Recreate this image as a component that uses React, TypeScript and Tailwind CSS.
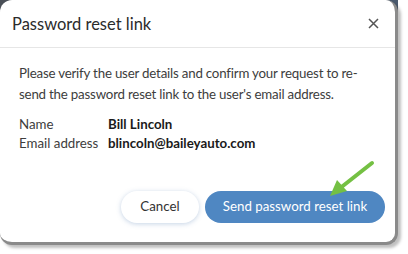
import React from "react";

export default function App() {
  return (
    <div className="w-[408px] h-[254px] bg-white relative overflow-hidden" style={{ fontFamily: "Lato, 'Noto Sans', sans-serif" }}>
      <div className="absolute left-0 top-0 w-[14px] h-[14px] bg-[#4a4f57]" />
      <div className="absolute left-[384px] top-0 w-[14px] h-[14px] bg-[#4a5a6e]" />
      <div className="relative w-[398px] h-[245px] bg-white rounded-[12px] border-r-[3px] border-b-[3px] border-[#8a8a8a] shadow-[3px_3px_3px_rgba(0,0,0,0.25)] flex flex-col">
        <div className="h-[48px] flex items-center justify-between pl-[12px] pr-[16px] border-b border-[#e6e6e6]">
          <span className="text-[16.5px] text-[#2b2b2b] pt-[1px]">Password reset link</span>
          <svg width="11" height="11" viewBox="0 0 11 11">
            <path d="M1 1L10 10M10 1L1 10" stroke="#555" strokeWidth="1.5" />
          </svg>
        </div>
        <div className="pl-[19px] pr-[16px] pt-[15px] text-[13.3px] leading-[21px] text-[#3d3d3d]">
          <p className="tracking-[-0.2px]">Please verify the user details and confirm your request to re-<br />send the password reset link to the user's email address.</p>
          <div className="mt-[10px] grid grid-cols-[89px_1fr] leading-[19px]">
            <span>Name</span>
            <span className="font-bold text-[#1a1a1a]">Bill Lincoln</span>
            <span>Email address</span>
            <span className="font-bold text-[#1a1a1a]">blincoln@baileyauto.com</span>
          </div>
        </div>
        <div className="mt-auto mb-[19px] flex justify-end gap-[6px] pr-[10px]">
          <button className="w-[78px] h-[32px] rounded-full bg-white text-[13.3px] text-[#333] shadow-[0_1px_5px_rgba(90,130,180,0.35)]">Cancel</button>
          <button className="w-[180px] h-[32px] rounded-full bg-[#4f87c2] text-[13.3px] text-white">Send password reset link</button>
        </div>
      </div>
      <svg className="absolute left-[325px] top-[160px]" width="52" height="42" viewBox="0 0 52 42">
        <path d="M47 3L14 29" stroke="#74c043" strokeWidth="4" strokeLinecap="round" />
        <path d="M5 36L12 20L22 31Z" fill="#74c043" />
      </svg>
    </div>
  );
}
